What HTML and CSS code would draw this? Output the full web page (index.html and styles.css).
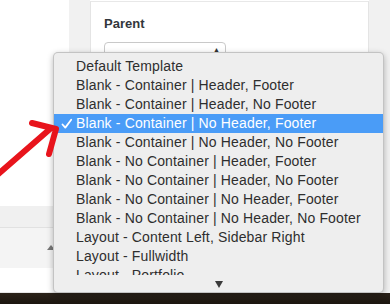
FILE: index.html
```html
<!DOCTYPE html>
<html>
<head>
<meta charset="utf-8">
<link rel="stylesheet" href="styles.css">
</head>
<body>
<div class="screen">
  <div class="page">
    <div class="main">
      <div class="blank"></div>
      <div class="band1"></div>
      <div class="band2"><span class="toggle"></span></div>
      <div class="band3"></div>
    </div>
    <div class="gutter"></div>
    <div class="panel">
      <div class="label">Parent</div>
      <div class="select"><span class="sel-text">(no parent)</span><span class="stepper">▲</span></div>
    </div>
    <div class="side"></div>
  </div>
  <div class="taskbar"></div>

  <div class="menu">
    <div class="list">
      <div class="item">Default Template</div>
      <div class="item">Blank - Container | Header, Footer</div>
      <div class="item">Blank - Container | Header, No Footer</div>
      <div class="item selected"><svg class="check" width="12" height="12" viewBox="0 0 12 12"><path d="M1.5 6.5 L4.3 9.6 L10.2 1.8" fill="none" stroke="#fff" stroke-width="1.8" stroke-linecap="round" stroke-linejoin="round"/></svg>Blank - Container | No Header, Footer</div>
      <div class="item">Blank - Container | No Header, No Footer</div>
      <div class="item">Blank - No Container | Header, Footer</div>
      <div class="item">Blank - No Container | Header, No Footer</div>
      <div class="item">Blank - No Container | No Header, Footer</div>
      <div class="item">Blank - No Container | No Header, No Footer</div>
      <div class="item">Layout - Content Left, Sidebar Right</div>
      <div class="item">Layout - Fullwidth</div>
      <div class="item">Layout - Portfolio</div>
    </div>
    <div class="scroll-down"><span class="down-tri"></span></div>
  </div>

  <svg class="annot" width="80" height="190" viewBox="0 0 80 190">
    <g fill="none" stroke="#e8141c" stroke-width="6" stroke-linecap="round" stroke-linejoin="round">
      <path d="M-4 176 L50 129"/>
      <path d="M32 123 L56 129 L49 154"/>
    </g>
  </svg>
</div>
</body>
</html>
```

FILE: styles.css
```css
* { box-sizing: border-box; }
html, body { margin: 0; padding: 0; }
body {
  width: 390px;
  height: 304px;
  overflow: hidden;
  background: #fff;
  font-family: "Liberation Sans", Arial, sans-serif;
}
.screen {
  position: relative;
  width: 390px;
  height: 304px;
  display: flex;
  flex-direction: column;
}
.page {
  display: flex;
  height: 293px;
}
.main {
  width: 69px;
  display: flex;
  flex-direction: column;
}
.blank { height: 206px; background: #fff; }
.band1 { height: 22px; background: #f0f0f0; border-bottom: 1px solid #e1e1e1; }
.band2 {
  height: 40px;
  background: #f4f4f4;
  display: flex;
  justify-content: flex-end;
  padding: 17px 14px 0 0;
}
.toggle {
  width: 0; height: 0;
  border-left: 4px solid transparent;
  border-right: 4px solid transparent;
  border-bottom: 5px solid #777;
}
.band3 { flex: 1; background: #fff; border-bottom: 1px solid #e6e6e6; }
.gutter { width: 21px; background: #f1f1f1; }
.panel {
  width: 279px;
  background: #fff;
  border-left: 1px solid #e4e4e4;
  border-right: 1px solid #e4e4e4;
  border-top: 1px solid #e8e8e8;
  margin-top: 1px;
  padding: 14px 0 0 13px;
}
.label {
  font-size: 13px;
  font-weight: bold;
  color: #32373c;
  height: 16px;
  line-height: 16px;
}
.select {
  margin-top: 10px;
  width: 122px;
  height: 26px;
  border: 1px solid #c9c9c9;
  border-radius: 4px;
  position: relative;
  padding: 6px 0 0 12px;
  font-size: 13px;
  line-height: 15px;
  color: #333;
}
.stepper {
  position: absolute;
  right: 5px;
  top: 3px;
  font-size: 7px;
  line-height: 8px;
  color: #333;
}
.side { flex: 1; background: #f1f1f1; }
.taskbar {
  height: 11px;
  background: linear-gradient(#2b2219, #1b150f);
}
.menu {
  position: absolute;
  left: 53px;
  top: 52px;
  width: 331px;
  height: 241px;
  background: #eeeeee;
  border-radius: 5px;
  border: 0.5px solid rgba(0,0,0,0.18);
  box-shadow: 0 2px 6px rgba(0,0,0,0.28);
  padding-top: 4px;
}
.list {
  height: 218px;
  overflow: hidden;
}
.item {
  position: relative;
  height: 19px;
  line-height: 19px;
  padding-left: 22px;
  font-size: 14px;
  letter-spacing: 0.15px;
  color: #2e2e2e;
  white-space: nowrap;
}
.item.selected {
  background: #4a9cf7;
  color: #fff;
}
.check {
  position: absolute;
  left: 7px;
  top: 4px;
}
.scroll-down {
  height: 19px;
  display: flex;
  justify-content: center;
  padding: 6px 0 0 0;
}
.down-tri {
  width: 0; height: 0;
  border-left: 4.5px solid transparent;
  border-right: 4.5px solid transparent;
  border-top: 7px solid #3a3a3a;
}
.annot {
  position: absolute;
  left: 0;
  top: 0;
  overflow: visible;
}
```
